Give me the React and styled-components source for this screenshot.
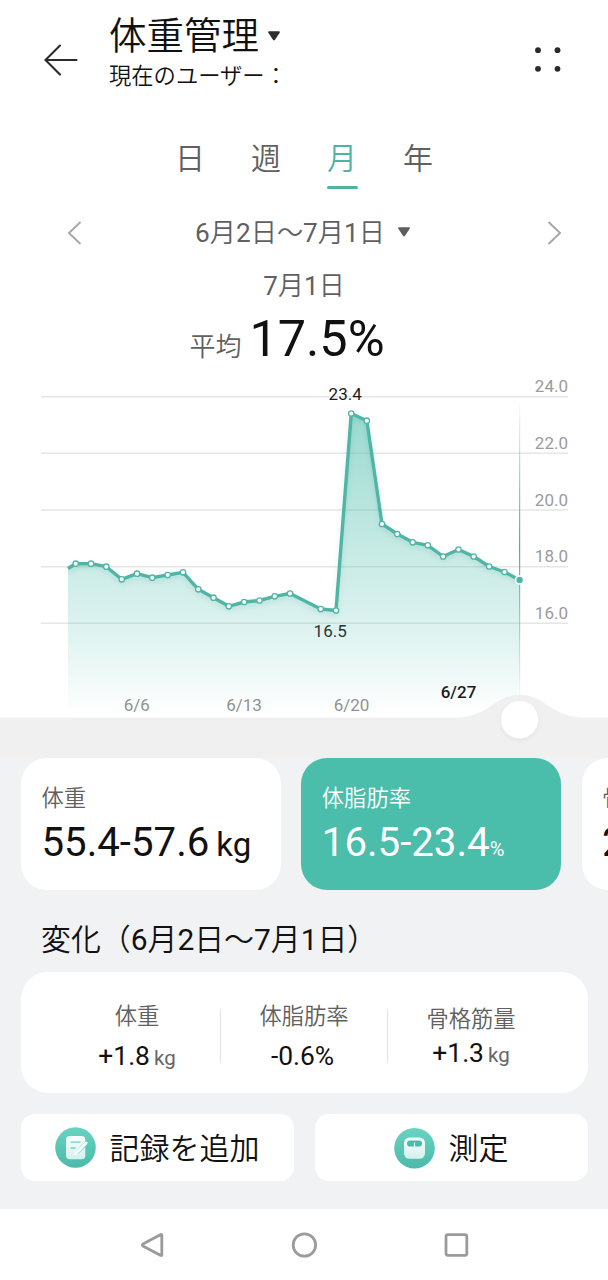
import React from "react";
import styled, { createGlobalStyle } from "styled-components";

const GlobalStyle = createGlobalStyle`
	* {
		box-sizing: border-box;
	}
	body {
		margin: 0;
		background: #f1f2f4;
		font-family: Roboto, "Noto Sans CJK JP", sans-serif;
		color: #111;
	}
`;

const GREEN = "#4fb3a2";

const Screen = styled.div`
	width: 608px;
	height: 1280px;
	overflow: hidden;
	display: flex;
	flex-direction: column;
	background: #f1f2f4;
	white-space: nowrap;
`;

/* Header */
const Header = styled.header`
	height: 120px;
	background: #fff;
	display: flex;
	padding: 14px 46px 0 44px;
`;

const BackIcon = styled.svg`
	margin: 29px 30px 0 0;
`;

const Titles = styled.div`
	flex: 1;
`;

const Title = styled.h1`
	margin: 0;
	height: 44px;
	display: flex;
	align-items: center;
	gap: 8px;
	font-size: 37.5px;
	line-height: 44px;
	font-weight: 350;
`;

const SubTitle = styled.div`
	font-size: 22.3px;
	line-height: 30px;
	margin-top: 3px;
	font-weight: 350;
`;

const MenuIcon = styled.svg`
	margin-top: 32px;
`;

/* Period */
const Tabs = styled.nav`
	height: 80px;
	background: #fff;
	display: flex;
	justify-content: center;
	gap: 46px;
	padding-top: 17px;
`;

const Tab = styled.div`
	width: 30px;
	height: 52px;
	font-size: 30px;
	line-height: 44px;
	font-weight: 350;
	color: ${props => (props.$active ? GREEN : "#606060")};
	display: flex;
	flex-direction: column;
	justify-content: space-between;

	&::after {
		content: "";
		height: 3.5px;
		flex: none;
		margin-right: -1px;
		border-radius: 2px;
		background: ${props => (props.$active ? GREEN : "transparent")};
	}
`;

const RangeRow = styled.div`
	height: 60px;
	background: #fff;
	display: flex;
	align-items: center;
	justify-content: space-between;
	padding: 5px 46px 0 67px;
`;

const Range = styled.div`
	display: flex;
	align-items: center;
	gap: 12px;
	padding: 1px 23px 0 0;
	font-size: 26.2px;
	line-height: 36px;
	font-weight: 350;
	color: #606060;

	svg {
		margin-bottom: 3px;
	}
`;

const Digit = styled.span`
	font-weight: 400;
`;

const Summary = styled.div`
	height: 110px;
	background: #fff;
	text-align: center;
	padding-top: 8px;
`;

const SummaryDate = styled.div`
	font-size: 26px;
	line-height: 36px;
	font-weight: 350;
	color: #606060;
`;

const Average = styled.div`
	display: flex;
	align-items: baseline;
	justify-content: center;
	gap: 8px;
	padding-right: 34px;
	font-size: 50.4px;
	line-height: 60px;
	margin-top: 5px;
`;

const AverageLabel = styled.span`
	font-size: 26px;
	font-weight: 350;
	color: #606060;
`;

/* Chart */
const ChartSvg = styled.svg`
	display: block;
	flex: none;
	background: #fff;
	font-family: Roboto, sans-serif;
`;

/* Cards */
const CardStrip = styled.div`
	display: flex;
	gap: 20.3px;
	padding-left: 21px;
	height: 132px;
	overflow: hidden;
`;

const Card = styled.div`
	flex: none;
	width: 260px;
	height: 132px;
	border-radius: 26px;
	padding: 25px 20.5px;
	background: ${props => (props.$active ? "#4abdab" : "#fff")};
	color: ${props => (props.$active ? "#fff" : "#111")};
`;

const CardLabel = styled.div`
	font-size: 22.3px;
	line-height: 30px;
	font-weight: 350;
	color: ${props => (props.$active ? "#fff" : "#606060")};
`;

const CardValue = styled.div`
	font-size: 40.2px;
	line-height: 48px;
	margin-top: 6px;
`;

const CardUnit = styled.span`
	font-size: ${props => (props.$small ? "20px" : "33px")};
	margin-left: ${props => (props.$small ? "0" : "7px")};
`;

const SectionTitle = styled.h2`
	margin: 28px 0 0 41px;
	font-size: 29.9px;
	line-height: 44px;
	height: 54px;
	font-weight: 350;
`;

const ChangePanel = styled.div`
	margin: 0 20px 0 21px;
	height: 121px;
	flex: none;
	border-radius: 27px;
	background: #fff;
	display: flex;
	padding: 37px 33px 0;
`;

const Change = styled.div`
	flex: 1;
	height: 54px;
	display: flex;
	flex-direction: column;
	align-items: center;
	border-right: 1px solid ${props => (props.$last ? "transparent" : "#e2e2e2")};
`;

const ChangeLabel = styled.div`
	font-size: 22.3px;
	line-height: 30px;
	margin-top: ${props => (props.$tight ? "-5px" : "-8px")};
	font-weight: 350;
	color: #606060;
`;

const ChangeValue = styled.div`
	font-size: 26.4px;
	line-height: 32px;
	margin-top: ${props => (props.$tight ? "3px" : "9px")};
	padding-right: ${props => (props.$percent ? "3px" : "0")};
`;

const ChangeUnit = styled.span`
	font-size: 20.5px;
	margin-left: 4px;
	color: #666;
`;

const Actions = styled.div`
	display: flex;
	gap: 21px;
	padding: 0 20px 0 21px;
	margin-top: 21px;
`;

const ActionButton = styled.button`
	flex: 1;
	height: 67px;
	padding: 0 1px 0 0;
	border: 0;
	border-radius: 14px;
	background: #fff;
	color: #111;
	display: flex;
	align-items: center;
	justify-content: center;
	gap: 14px;
	font-family: inherit;
	font-size: 30px;
	line-height: 44px;
	font-weight: 350;
`;

const ActionText = styled.span`
	padding-top: 3px;
`;

const NavBar = styled.footer`
	height: 71px;
	margin-top: auto;
	background: #fff;
	display: flex;
	align-items: center;
	justify-content: center;
	gap: 126px;
`;

/* Digits are one step heavier than the kanji around them */
const DateText = ({ children }) => (
	<span>
		{children.split(/(\d+)/).map((part, i) => (i % 2 ? <Digit key={i}>{part}</Digit> : part))}
	</span>
);

const Caret = ({ color }) => (
	<svg width="14" height="12" viewBox="0 0 14 12">
		<path d="M2 1.2h10q1.4.2.7 1.6L8 9.8q-1 1.2-2 0L1.3 2.8Q.6 1.4 2 1.2z" fill={color} />
	</svg>
);

const Chevron = ({ right }) => (
	<svg width="16" height="26" viewBox="0 0 16 26" fill="none" stroke="#a8a8a8" strokeWidth="2">
		<path d={right ? "M2.5 2 14 13 2.5 24" : "M13.5 2 2 13 13.5 24"} />
	</svg>
);

const points = [
	[68, 568.5], [75.7, 563.7], [91, 563.7], [106.3, 566.7], [121.7, 579.3],
	[137, 573.7], [152.3, 577.7], [167.7, 575], [183, 572.3], [198.3, 589.3],
	[213.5, 597.7], [228.8, 606.3], [244.2, 602], [259.5, 600.5], [274.7, 596.3],
	[290, 593.5], [320.7, 609], [336, 610.5], [351.3, 413.5], [366.8, 420.7],
	[382, 524], [397.3, 534], [412.7, 542.3], [427.8, 545.3], [443.2, 556.5],
	[458.5, 549.5], [473.7, 556.5], [489.2, 566.5], [504.5, 572], [519.6, 580]
];

const levels = ["24.0", "22.0", "20.0", "18.0", "16.0"];

const Chart = () => {
	const line = points.map(p => p.join(",")).join(" ");
	return (
		<ChartSvg width="608" height="388" viewBox="0 370 608 388">
			<defs>
				<linearGradient id="area" gradientUnits="userSpaceOnUse" x1="0" y1="413" x2="0" y2="714">
					<stop offset="0" stopColor="#4abdab" stopOpacity="0.56" />
					<stop offset="0.5" stopColor="#4abdab" stopOpacity="0.29" />
					<stop offset="0.75" stopColor="#4abdab" stopOpacity="0.17" />
					<stop offset="1" stopColor="#4abdab" stopOpacity="0" />
				</linearGradient>
				<linearGradient id="cursor" gradientUnits="userSpaceOnUse" x1="0" y1="398" x2="0" y2="700">
					<stop offset="0" stopColor="#3f9f98" stopOpacity="0" />
					<stop offset="0.5" stopColor="#3f9f98" stopOpacity="0.9" />
					<stop offset="1" stopColor="#3f9f98" stopOpacity="0" />
				</linearGradient>
				<filter id="lineShadow" x="-10%" y="-10%" width="120%" height="130%">
					<feDropShadow dx="0" dy="3" stdDeviation="2.5" floodColor="#2c7a6d" floodOpacity="0.14" />
				</filter>
				<filter id="knobShadow" x="-30%" y="-30%" width="160%" height="170%">
					<feDropShadow dx="0" dy="2" stdDeviation="2.5" floodColor="#000" floodOpacity="0.05" />
				</filter>
			</defs>
			{levels.map((label, i) => (
				<g key={label}>
					<path d={`M41 ${396.7 + i * 56.65}H568`} stroke="#e6e6e6" strokeWidth="1.5" />
					<text x="568" y={392.4 + i * 56.65} textAnchor="end" fontSize="17" fill="#9b9b9b">
						{label}
					</text>
				</g>
			))}
			<polygon points={`68,718 ${line} 519.6,718`} fill="url(#area)" />
			<rect x="519" y="398" width="1.2" height="302" fill="url(#cursor)" />
			<polyline
				points={line}
				fill="none"
				stroke="#50b5a4"
				strokeWidth="3.4"
				strokeLinejoin="round"
				filter="url(#lineShadow)"
			/>
			{points.slice(1, -1).map(([x, y]) => (
				<circle key={x} cx={x} cy={y} r="2.7" fill="#fff" stroke="#50b5a4" strokeWidth="1.3" />
			))}
			<circle cx="519.6" cy="580" r="4" fill="#50b5a4" stroke="#fff" strokeWidth="1.6" />
			<g fontSize="17" textAnchor="middle" fill="#8f9292">
				<text x="345.2" y="400.3" fill="#1c1c1c">23.4</text>
				<text x="330.2" y="637.4" fill="#2b3433">16.5</text>
				<text x="136.8" y="710.5">6/6</text>
				<text x="244" y="710.5">6/13</text>
				<text x="351.5" y="710.5">6/20</text>
				<text x="458.5" y="698.2" fill="#1c1c1c" fontWeight="500">6/27</text>
			</g>
			<path
				d="M0 717.7H455C478 717.7 490 706 502 699Q520 690.5 538 699C550 706 562 717.7 585 717.7H608V758H0z"
				fill="#f0f0f0"
			/>
			<circle cx="519.6" cy="719.7" r="18.6" fill="#fff" filter="url(#knobShadow)" />
		</ChartSvg>
	);
};

const ActionDefs = ({ id }) => (
	<defs>
		<linearGradient id={id} x1="0" y1="0" x2="0" y2="1">
			<stop offset="0" stopColor="#68d3c1" />
			<stop offset="1" stopColor="#4bbaaa" />
		</linearGradient>
		<linearGradient id={`${id}Paper`} x1="0" y1="0" x2="0" y2="1">
			<stop offset="0" stopColor="#f8fffd" />
			<stop offset="1" stopColor="#d3f1eb" />
		</linearGradient>
	</defs>
);

const RecordIcon = () => (
	<svg width="41" height="42" viewBox="0 0 41 42">
		<ActionDefs id="record" />
		<circle cx="20.5" cy="20.5" r="20.3" fill="url(#record)" />
		<rect x="11" y="9" width="19.3" height="23.3" rx="3.8" fill="url(#recordPaper)" />
		<path d="M15.5 15.2h10M15.5 21h5" stroke="#79cfc1" strokeWidth="1.3" />
		<path d="M22.5 25 31.5 16" stroke="#6fcfc0" strokeWidth="3.8" strokeLinecap="round" />
		<path d="m19 28.2 1.2-3.4L30.2 15q1.1-.8 2 0 .8 1-.1 2L22.4 27z" fill="#f4fffc" />
	</svg>
);

const ScaleIcon = () => (
	<svg width="41" height="42" viewBox="0 0 41 42">
		<ActionDefs id="scale" />
		<circle cx="20.5" cy="21.2" r="20.3" fill="url(#scale)" />
		<rect x="10" y="10.4" width="21" height="21.4" rx="5.5" fill="url(#scalePaper)" />
		<rect x="13" y="13.4" width="15" height="6.2" rx="3.1" fill="#4dbbab" />
		<path d="M20.5 15.5v4.2" stroke="#fff" strokeWidth="1.2" />
	</svg>
);

const App = () => {
	return (
		<Screen>
			<GlobalStyle />
			<Header>
				<BackIcon width="35" height="34" viewBox="0 0 35 34" fill="none" stroke="#2a2a2a" strokeWidth="2.1" strokeLinecap="round">
					<path d="M1.5 17H32.5M16 2.5 1.5 17 16 31.5" />
				</BackIcon>
				<Titles>
					<Title>
						体重管理
						<Caret color="#2e2e2e" />
					</Title>
					<SubTitle>現在のユーザー：</SubTitle>
				</Titles>
				<MenuIcon width="28" height="28" viewBox="534 46 28 28" fill="#2a2a2a">
					<circle cx="538" cy="50.2" r="2.9" />
					<circle cx="557.5" cy="50.2" r="2.9" />
					<circle cx="538" cy="68.8" r="2.9" />
					<circle cx="557.5" cy="68.8" r="2.9" />
				</MenuIcon>
			</Header>

			<Tabs>
				<Tab>日</Tab>
				<Tab>週</Tab>
				<Tab $active>月</Tab>
				<Tab>年</Tab>
			</Tabs>
			<RangeRow>
				<Chevron />
				<Range>
					<DateText>6月2日〜7月1日</DateText>
					<Caret color="#5e5e5e" />
				</Range>
				<Chevron right />
			</RangeRow>
			<Summary>
				<SummaryDate>
					<DateText>7月1日</DateText>
				</SummaryDate>
				<Average>
					<AverageLabel>平均</AverageLabel>
					17.5%
				</Average>
			</Summary>

			<Chart />

			<CardStrip>
				<Card>
					<CardLabel>体重</CardLabel>
					<CardValue>
						55.4-57.6<CardUnit>kg</CardUnit>
					</CardValue>
				</Card>
				<Card $active>
					<CardLabel $active>体脂肪率</CardLabel>
					<CardValue>
						16.5-23.4<CardUnit $small>%</CardUnit>
					</CardValue>
				</Card>
				<Card>
					<CardLabel>骨格筋量</CardLabel>
					<CardValue>2</CardValue>
				</Card>
			</CardStrip>

			<SectionTitle>
				<DateText>変化（6月2日〜7月1日）</DateText>
			</SectionTitle>
			<ChangePanel>
				<Change>
					<ChangeLabel>体重</ChangeLabel>
					<ChangeValue>
						+1.8<ChangeUnit>kg</ChangeUnit>
					</ChangeValue>
				</Change>
				<Change>
					<ChangeLabel>体脂肪率</ChangeLabel>
					<ChangeValue $percent>-0.6%</ChangeValue>
				</Change>
				<Change $last>
					<ChangeLabel $tight>骨格筋量</ChangeLabel>
					<ChangeValue $tight>
						+1.3<ChangeUnit>kg</ChangeUnit>
					</ChangeValue>
				</Change>
			</ChangePanel>

			<Actions>
				<ActionButton>
					<RecordIcon />
					<ActionText>記録を追加</ActionText>
				</ActionButton>
				<ActionButton>
					<ScaleIcon />
					<ActionText>測定</ActionText>
				</ActionButton>
			</Actions>

			<NavBar>
				<svg width="26" height="26" viewBox="0 0 26 26" fill="none" stroke="#9b9b9b" strokeWidth="2.8" strokeLinejoin="round">
					<path d="M22.8 2.8v20.4q-.3.7-1 .2L3.9 14q-1.2-1 0-2L21.8 2.5q.7-.4 1 .3z" />
				</svg>
				<svg width="26" height="26" viewBox="0 0 26 26" fill="none" stroke="#9b9b9b" strokeWidth="2.8">
					<circle cx="13.4" cy="13" r="11.2" />
				</svg>
				<svg width="26" height="26" viewBox="0 0 26 26" fill="none" stroke="#9b9b9b" strokeWidth="2.8">
					<rect x="3" y="2.6" width="20.8" height="20.8" rx="1.8" />
				</svg>
			</NavBar>
		</Screen>
	);
};

export default App;
